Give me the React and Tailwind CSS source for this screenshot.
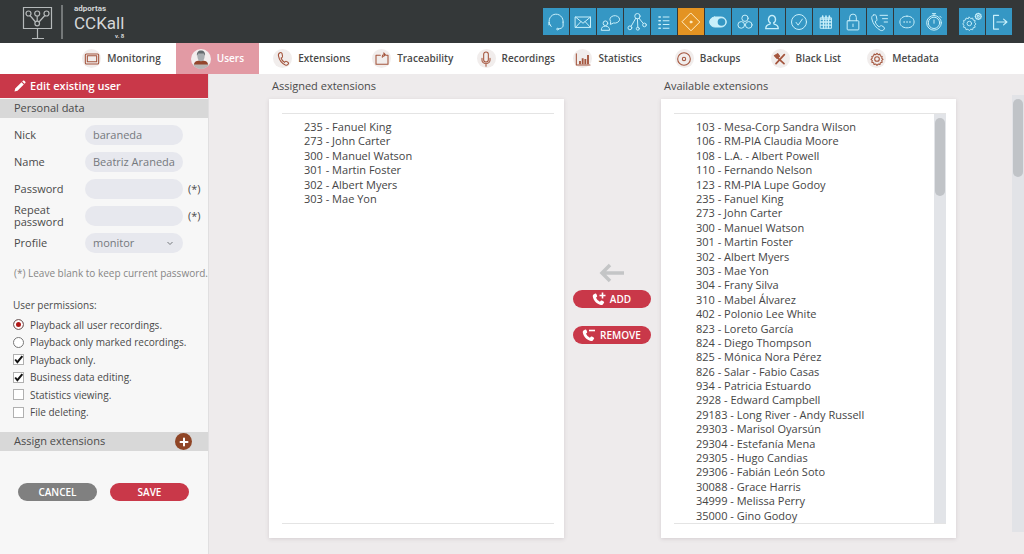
import React, { useState } from 'react';

const ASSIGNED = [
  '235 - Fanuel King',
  '273 - John Carter',
  '300 - Manuel Watson',
  '301 - Martin Foster',
  '302 - Albert Myers',
  '303 - Mae Yon',
];

const AVAILABLE = [
  '103 - Mesa-Corp Sandra Wilson',
  '106 - RM-PIA Claudia Moore',
  '108 - L.A. - Albert Powell',
  '110 - Fernando Nelson',
  '123 - RM-PIA Lupe Godoy',
  '235 - Fanuel King',
  '273 - John Carter',
  '300 - Manuel Watson',
  '301 - Martin Foster',
  '302 - Albert Myers',
  '303 - Mae Yon',
  '304 - Frany Silva',
  '310 - Mabel Álvarez',
  '402 - Polonio Lee White',
  '823 - Loreto García',
  '824 - Diego Thompson',
  '825 - Mónica Nora Pérez',
  '826 - Salar - Fabio Casas',
  '934 - Patricia Estuardo',
  '2928 - Edward Campbell',
  '29183 - Long River - Andy Russell',
  '29303 - Marisol Oyarsún',
  '29304 - Estefanía Mena',
  '29305 - Hugo Candias',
  '29306 - Fabián León Soto',
  '30088 - Grace Harris',
  '34999 - Melissa Perry',
  '35000 - Gino Godoy',
];

function Icon({ children, className = 'w-5 h-5', width = 1.2 }) {
  return (
    <svg className={className} viewBox="0 0 24 24" fill="none" stroke="currentColor" strokeWidth={width} strokeLinecap="round" strokeLinejoin="round" aria-hidden="true">
      {children}
    </svg>
  );
}

const PHONE = 'M7.500 2.500c-2 .8-2.800 2.400-2.300 4.800C6.300 13 10.500 18.500 15.500 21c2 .8 3.700.2 4.700-1.700.4-.9.200-1.600-.5-2.100l-2.400-1.600c-.8-.5-1.500-.4-2.100.3l-1 1.100c-2.300-1.200-4.300-4-5-6.500l1.300-.7c.8-.5 1-1.100.8-2L10.500 3.700c-.3-1.200-1.500-1.700-3-1.200z';

const gear = (
  <path d="M12 3.500l1.800 2 2.600-.8.7 2.700 2.700.7-.8 2.600 2 1.800-2 1.800.8 2.600-2.700.7-.7 2.700-2.600-.8-1.800 2-1.800-2-2.600.8-.7-2.700-2.700-.7.8-2.600-2-1.800 2-1.800-.8-2.600 2.700-.7.7-2.700 2.600.8z" />
);

const TOOLS = [
  { name: 'Agent', icon: <><path d="M6 17A8.500 8.500 0 1 1 20.500 12.500" /><path d="M3.500 12.500v3M6 17l-1.500-2M20.500 12v5c-.8 2-2.500 3-5.500 3.300" /><circle cx="13.800" cy="20.500" r="1" /></> },
  { name: 'Mail', icon: <><rect x="3" y="6" width="18" height="12.500" /><path d="m3 6 9 7.500L21 6M3 18.500l6.500-7M21 18.500l-6.500-7" /></> },
  { name: 'Chat', icon: <><circle cx="6.500" cy="13.500" r="2.800" /><path d="M1.500 21.500c0-3 2-4.500 5-4.500s5 1.500 5 4.500zM12.500 14.500l.3-3.200a5.800 4.500 0 1 1 3.700 2z" /></> },
  { name: 'Network', icon: <><circle cx="12.500" cy="5" r="3.200" /><circle cx="3.500" cy="19" r="2.300" /><circle cx="13" cy="20" r="1.800" /><circle cx="21" cy="15.500" r="2.200" /><path d="m10.500 7.500-5.500 9.500M12.500 8.200l.5 10M14.500 7.500l5 6.300" /></> },
  { name: 'List', icon: <><path d="M11 6h7M11 10.500h7M11 15h7M11 19.500h7" /><path d="M6 6h1.500M6 10.500h1.500M6 15h1.500M6 19.500h1.500" strokeWidth="2" /></> },
  { name: 'Flow', active: true, icon: <><path d="M12 1.500 22.500 12 12 22.500 1.500 12z" /><circle cx="12" cy="12" r="1.200" fill="currentColor" /></> },
  { name: 'Toggle', icon: <><rect x="2" y="6" width="20" height="12" rx="6" fill="currentColor" /><circle cx="16.200" cy="12" r="4.600" fill="#3597c4" stroke="none" /></> },
  { name: 'Groups', icon: <><circle cx="12" cy="7.500" r="3.800" /><circle cx="7.500" cy="15.500" r="4" /><circle cx="16.500" cy="15.500" r="4" /></> },
  { name: 'Profile', icon: <path d="M12 4a4.300 4.800 0 0 1 2 9l.5 1.500c3 .6 5 2.300 5 5.500h-15c0-3.200 2-4.900 5-5.500L10 13a4.300 4.800 0 0 1 2-9z" strokeWidth="1.600" /> },
  { name: 'Tasks', icon: <><circle cx="12" cy="12" r="9" /><path d="m8.500 12.500 2.500 3.300 5-7.300" /></> },
  { name: 'Calendar', icon: <><path d="M5.500 7h13v12.500h-13z" /><path d="M5.500 8.500h13M5.500 12h13M5.500 15.800h13M9 8v11.500M12 8v11.500M15 8v11.500" strokeWidth="1.600" /><path d="M8 5v2M12 5v2M16 5v2" strokeWidth="2" /></> },
  { name: 'Lock', icon: <><rect x="5" y="10.500" width="14" height="11" rx="1" /><path d="M8 10.500V6.500a4 4 0 0 1 8 0v4M12 14.500v3" /></> },
  { name: 'Call log', icon: <><g transform="translate(-3 1)"><path d={PHONE} /></g><path d="M12 4h9M15 8h6M17 12h4" /></> },
  { name: 'Messages', icon: <><path d="M12 5c5.200 0 8.500 2.800 8.500 7s-3.300 7-8.500 7-8.500-2.800-8.500-7S6.800 5 12 5z" /><path d="M8.500 12h.1M12 12h.1M15.500 12h.1" strokeWidth="2" /></> },
  { name: 'Timer', icon: <><circle cx="12" cy="13" r="8.800" /><circle cx="12" cy="13" r="6.800" /><path d="M12 9.500v4M10 2h4M12 2v2M19 5l1.500 1.500" /></> },
];

const SESSION_TOOLS = [
  { name: 'Settings', icon: <><g transform="translate(-2 3) scale(.9)">{gear}<circle cx="12" cy="12" r="3" /></g><g transform="translate(14.500 0) scale(.42)" strokeWidth="3">{gear}<circle cx="12" cy="12" r="3" /></g></> },
  { name: 'Log out', icon: <path d="M11.500 4H5.500v16.500h6M9.500 12h12M17.500 8.500l4 3.500-4 3.500" strokeWidth="1.400" /> },
];

const TABS = [
  { name: 'Monitoring', icon: <><rect x="2" y="4.500" width="20" height="15" rx="1.500" /><rect x="5" y="7" width="14" height="9" /></> },
  { name: 'Users' },
  { name: 'Extensions', icon: <path d={PHONE} /> },
  { name: 'Traceability', icon: <path d="M9.500 6.500H3V20h18V6.500h-3M12.500 9.500V8c0-1.500.5-2.500 2-2.500h2M14.500 3l2.500 2.500L14.500 8" /> },
  { name: 'Recordings', icon: <><rect x="8.500" y="1.500" width="7" height="15" rx="3.500" /><path d="M6 11v3a6 5 0 0 0 12 0v-3M12 19v4" /></> },
  { name: 'Statistics', icon: <><path d="M2 4v17h20.500" /><path d="M7.500 15v5M11.500 11v9M15.500 12v8M19.500 6v14" strokeWidth="2.800" strokeLinecap="butt" /></> },
  { name: 'Backups', icon: <><circle cx="12" cy="12" r="9.500" /><circle cx="12" cy="12" r="2.500" /></> },
  { name: 'Black List', icon: <><path d="m6 8 12 11M18.500 5.500 6 19" strokeWidth="2.600" /><path d="m3.500 7 5-3 3 4-4 3z" fill="currentColor" /></> },
  { name: 'Metadata', icon: <>{gear}<circle cx="12" cy="12" r="3.500" /></> },
];

const PERMISSIONS = [
  { type: 'radio', label: 'Playback all user recordings.', checked: true },
  { type: 'radio', label: 'Playback only marked recordings.' },
  { type: 'checkbox', label: 'Playback only.', checked: true },
  { type: 'checkbox', label: 'Business data editing.', checked: true },
  { type: 'checkbox', label: 'Statistics viewing.' },
  { type: 'checkbox', label: 'File deleting.' },
];

const FIELD = 'w-[98px] h-5 shrink-0 rounded-full bg-[#e7e8ee] px-2 text-[11px] text-[#75787d] outline-none';

function ToolButton({ tool }) {
  return (
    <button
      type="button"
      aria-label={tool.name}
      className={`flex h-[27px] w-[26px] items-center justify-center ${tool.active ? 'bg-[#e39322] text-[#fff0c8]' : 'bg-[#3597c4] text-[#c8effa]'}`}
    >
      <Icon>{tool.icon}</Icon>
    </button>
  );
}

function Header() {
  return (
    <header className="flex h-[43px] shrink-0 items-center justify-between bg-[#343839] pr-3 pl-[22px]">
      <div className="flex items-center">
        <svg className="h-9 w-[42px]" viewBox="0 0 42 36" fill="none" stroke="#b5b9ba" strokeWidth="1.200" aria-hidden="true">
          <path d="M1.500 3.500h28v21h-28zM15.500 24.500V34M10 34.500h12" />
          <circle cx="6.500" cy="9.500" r="2.500" />
          <circle cx="15.200" cy="9.500" r="2.500" />
          <circle cx="24.500" cy="9.500" r="2.500" />
          <circle cx="15.200" cy="19.500" r="2.300" />
          <path d="m8 11.500 5.500 6.500M15.200 12v5M22.800 11.500 17 18" />
          <path d="M40 1v34" strokeWidth="1" />
        </svg>
        <div className="flex flex-col pl-[10px] font-[Roboto,sans-serif] text-[#d4d7d8]">
          <span className="text-[8px] leading-[10px] font-bold">adportas</span>
          <span className="text-[17px] leading-[19px]">CCKall</span>
          <span className="text-right text-[6px] leading-[6px] font-bold">v. 8</span>
        </div>
      </div>
      <div className="flex gap-3">
        <div className="flex gap-px">
          {TOOLS.map(t => <ToolButton key={t.name} tool={t} />)}
        </div>
        <div className="flex gap-px">
          {SESSION_TOOLS.map(t => <ToolButton key={t.name} tool={t} />)}
        </div>
      </div>
    </header>
  );
}

function Avatar() {
  return (
    <svg className="h-5 w-5" viewBox="0 0 20 20" aria-hidden="true">
      <circle cx="10" cy="10" r="10" fill="#f3eeee" />
      <path d="M2.500 16.500c.5-4 3.500-5 7.500-5s7 1 7.500 5A10 10 0 0 1 10 20a10 10 0 0 1-7.500-3.500z" fill="#b9b5b4" />
      <path d="M3 15.500c.5-3.200 3-4 7-4s6.500.8 7 4z" fill="#94452c" />
      <ellipse cx="10" cy="7.500" rx="3.600" ry="4.800" fill="#a8adb0" />
      <path d="M6 7c-.6-3.500 1.200-5.500 4-5.500S14.600 3.500 14 7l-1.300-2.500H7.300z" fill="#646c6f" />
    </svg>
  );
}

function Tabs() {
  return (
    <nav className="grid h-[31px] shrink-0 grid-cols-[109fr_83fr_106fr_96fr_110fr_74fr_126fr_70fr_124fr] bg-white pr-[59px] pl-[67px]">
      {TABS.map(t => (
        <a
          key={t.name}
          href="#"
          className={`flex items-center justify-center gap-[6px] text-[10px] font-semibold whitespace-nowrap ${t.icon ? 'text-[#494949]' : 'bg-[#e29aa4] text-white'}`}
        >
          {t.icon ? (
            <span className="flex h-[19px] w-[19px] shrink-0 items-center justify-center rounded-full bg-[#f1edec] text-[#a4553d]">
              <Icon className="h-4 w-4" width={1.6}>{t.icon}</Icon>
            </span>
          ) : <Avatar />}
          {t.name}
        </a>
      ))}
    </nav>
  );
}

function Field({ id, label, note, children }) {
  return (
    <div className="flex h-[27px] items-center">
      <label htmlFor={id} className="w-[71px] shrink-0">{label}</label>
      {children}
      {note && <span className="pl-[5px]">{note}</span>}
    </div>
  );
}

function Permission({ type, label, checked }) {
  const [on, setOn] = useState(!!checked);
  return (
    <label className="flex items-center gap-[6px]">
      {type === 'radio' ? (
        <input
          type="radio"
          name="playback"
          defaultChecked={checked}
          className="h-[11px] w-[11px] appearance-none rounded-full border border-[#777] bg-white checked:bg-[#b01818] checked:shadow-[inset_0_0_0_2px_white]"
        />
      ) : (
        <span className="relative flex">
          <input
            type="checkbox"
            checked={on}
            onChange={e => setOn(e.target.checked)}
            className="h-[11px] w-[11px] appearance-none border border-[#b0b0b0] bg-white"
          />
          {on && (
            <svg className="pointer-events-none absolute inset-0 h-[11px] w-[11px]" viewBox="0 0 10 10" fill="none" stroke="#111" strokeWidth="1.800" aria-hidden="true">
              <path d="m2 5 2 2.500L8.500 2" />
            </svg>
          )}
        </span>
      )}
      {label}
    </label>
  );
}

function Sidebar() {
  return (
    <aside className="flex w-[209px] shrink-0 flex-col border-r border-[#e0dfe0] bg-[#f7f7f7]">
      <h1 className="flex h-6 items-center gap-1 bg-[#c93849] pl-[14px] text-[11px] font-semibold text-white">
        <svg className="h-3 w-3" viewBox="0 0 12 12" fill="currentColor" aria-hidden="true">
          <path d="M.5 11.500 1.200 8.500 7.500 2.200 9.800 4.500 3.500 10.800zM8.200 1.500 9 .7c.4-.4.9-.4 1.300 0l1 1c.4.400.400.900 0 1.300l-.8.800z" />
        </svg>
        Edit existing user
      </h1>
      <h2 className="mt-px flex h-[19px] items-center bg-[#d8d8d8] pl-[14px] text-[11px] font-medium">Personal data</h2>

      <form className="flex flex-col">
        <div className="pt-[3px] pl-[14px] text-[11px] leading-3">
          <Field id="nick" label="Nick"><input id="nick" type="text" defaultValue="baraneda" className={FIELD} /></Field>
          <Field id="name" label="Name"><input id="name" type="text" defaultValue="Beatriz Araneda" className={FIELD} /></Field>
          <Field id="password" label="Password" note="(*)"><input id="password" type="password" className={FIELD} /></Field>
          <Field id="repeat" label="Repeat password" note="(*)"><input id="repeat" type="password" className={FIELD} /></Field>
          <Field id="profile" label="Profile">
            <span className="relative flex">
              <select id="profile" defaultValue="monitor" className={`${FIELD} appearance-none`}>
                <option>monitor</option>
              </select>
              <svg className="pointer-events-none absolute top-2 right-[10px] h-[5px] w-[6px]" viewBox="0 0 6 5" fill="none" stroke="#75787d" aria-hidden="true">
                <path d="m.5 1 2.500 2.500L5.500 1" />
              </svg>
            </span>
          </Field>
          <p className="pt-[11px] text-[10px] leading-3 whitespace-nowrap text-[#868686]">(*) Leave blank to keep current password.</p>
        </div>

        <fieldset className="pt-5 pl-[13px] text-[10px] leading-3">
          <legend className="contents">User permissions:</legend>
          <div className="mt-[5px] grid h-[105px] auto-rows-fr">
            {PERMISSIONS.map(p => <Permission key={p.label} {...p} />)}
          </div>
        </fieldset>

        <div className="mt-[11px] flex h-[19px] items-center justify-between bg-[#d8d8d8] pr-4 pl-[14px]">
          <h2 className="text-[11px] font-medium">Assign extensions</h2>
          <button type="button" aria-label="Add extension" className="flex h-[17px] w-[17px] items-center justify-center rounded-full bg-[#8f4526] text-white">
            <Icon className="h-3 w-3" width={4}><path d="M12 5v14M5 12h14" /></Icon>
          </button>
        </div>

        <div className="mt-8 flex gap-[13px] pl-[18px] text-[10px] font-semibold text-white">
          <button type="button" className="h-[18px] w-[79px] rounded-full bg-[#808080]">CANCEL</button>
          <button type="submit" className="h-[18px] w-[79px] rounded-full bg-[#c93849]">SAVE</button>
        </div>
      </form>
    </aside>
  );
}

function ExtensionPanel({ title, items, scroll }) {
  return (
    <section className="flex min-w-0 flex-1 flex-col">
      <h2 className="flex h-[25px] items-center pl-[3px] text-[11px] font-medium">{title}</h2>
      <div className="flex flex-1 bg-white pt-[14px] pr-[10px] pb-[14px] pl-[13px] shadow-[0_1px_4px_#d3cdd0]">
        <div className="flex flex-1 border-y border-[#e4e4e4]">
          <ul className="grid flex-1 grid-rows-[repeat(28,1fr)] pt-[6px] pl-[22px] text-[11px] leading-[14px] whitespace-nowrap text-[#454545]">
            {items.map(item => <li key={item}>{item}</li>)}
          </ul>
          {scroll && (
            <div className="w-3 bg-[#e2e4e8] px-px pt-1">
              <div className="h-[78px] rounded-full bg-[#c0c3c7]" />
            </div>
          )}
        </div>
      </div>
    </section>
  );
}

function MoveButton({ children, sign }) {
  return (
    <button type="button" className="flex h-[18px] w-[78px] items-center justify-center gap-1 rounded-full bg-[#c93849] text-[10px] font-semibold text-white">
      <svg className="h-[14px] w-[14px]" viewBox="0 0 14 14" fill="currentColor" aria-hidden="true">
        <path d="M1.200 2.800 3.200 1.500c.5-.3 1 0 1.200.5l.7 1.700c.2.500 0 .9-.3 1.200L4 5.600c.7 1.800 2 3.200 3.900 4.200l.9-1c.3-.3.800-.4 1.200-.2l1.600.8c.5.300.7.800.4 1.300l-1.200 1.800c-.5.500-1.200.600-1.900.4C4.700 11.900 1.500 8.700.8 4.500c-.1-.7 0-1.300.400-1.700z" />
        <path d={sign} fill="none" stroke="currentColor" strokeWidth="1.600" />
      </svg>
      {children}
    </button>
  );
}

export default function App() {
  return (
    <div className="flex min-h-screen flex-col bg-[#eeebec] font-['Open_Sans',sans-serif] text-[#4a4a4a]">
      <Header />
      <Tabs />
      <div className="flex flex-1">
        <Sidebar />
        <main className="flex min-w-0 flex-1 pb-4 pl-[60px]">
          <ExtensionPanel title="Assigned extensions" items={ASSIGNED} />
          <div className="flex w-[97px] shrink-0 flex-col items-center pt-[189px] pr-[2px]">
            <svg className="mb-[7px] h-5 w-[26px]" viewBox="0 0 26 20" fill="none" stroke="#c4c5c6" strokeWidth="3.500" aria-hidden="true">
              <path d="M25 10H3M11 2 3 10l8 8" />
            </svg>
            <div className="flex flex-col gap-[18px]">
              <MoveButton sign="M7.500 3.500h6M10.500.5v6">ADD</MoveButton>
              <MoveButton sign="M7 2.500h6">REMOVE</MoveButton>
            </div>
          </div>
          <ExtensionPanel title="Available extensions" items={AVAILABLE} scroll />
          <div className="flex w-[68px] shrink-0 justify-end pt-[21px] pb-[6px]">
            <div className="w-3 bg-[#e2e3e7] px-px pt-1">
              <div className="h-[78px] rounded-full bg-[#c0c3c7]" />
            </div>
          </div>
        </main>
      </div>
    </div>
  );
}
